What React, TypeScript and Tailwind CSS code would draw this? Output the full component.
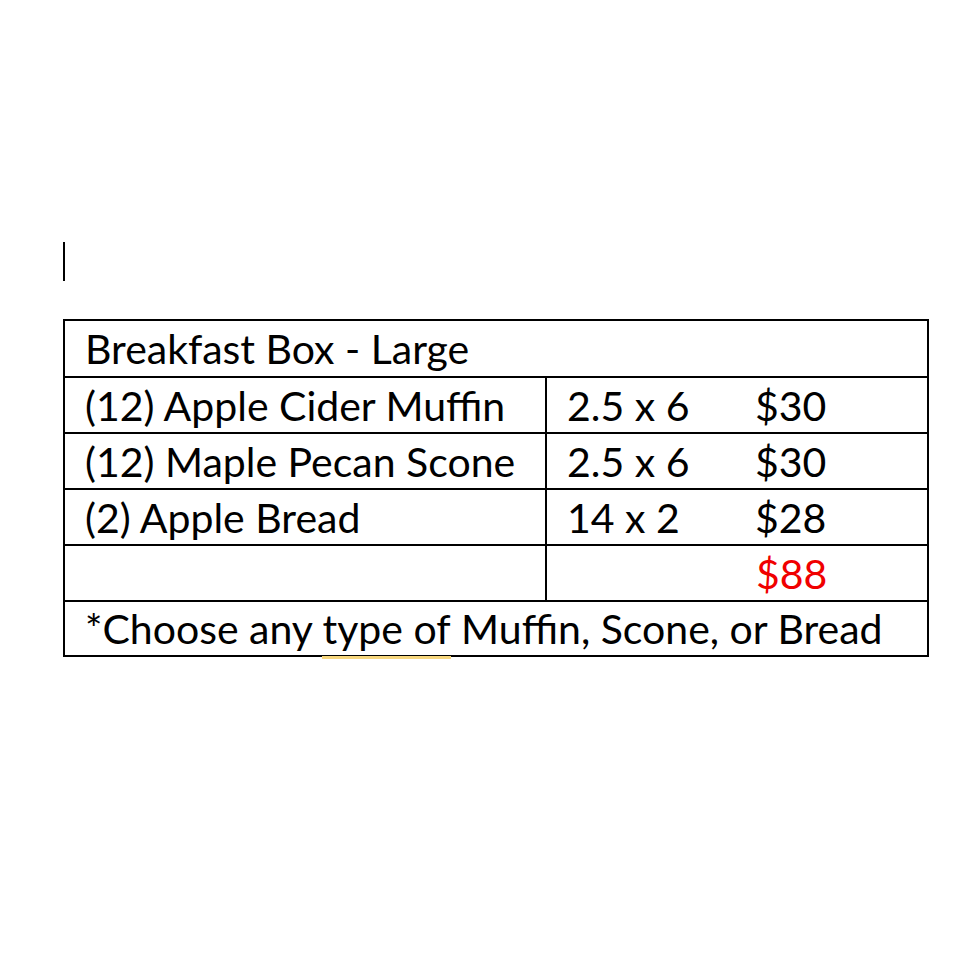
import React from "react";

const rows = [
  { name: "(12) Apple Cider Muffin", size: "2.5 x 6", price: "$30" },
  { name: "(12) Maple Pecan Scone", size: "2.5 x 6", price: "$30" },
  { name: "(2) Apple Bread", size: "14 x 2", price: "$28" },
];

export default function App() {
  return (
    <div className="w-[980px] h-[980px] bg-white text-black font-['Lato','Liberation_Sans',sans-serif]">
      <div className="pt-[242px] pl-[63px]">
        <div className="w-[2px] h-[39px] bg-black" />
      </div>
      <div className="ml-[63px] mt-[38px] w-[866px] border-2 border-black text-[41px] leading-none">
        <div className="h-[55px] flex items-center pl-[20px]">Breakfast Box - Large</div>
        {rows.map((r) => (
          <div key={r.name} className="h-[56px] flex border-t-2 border-black">
            <div className="w-[482px] flex items-center pl-[20px] border-r-2 border-black">{r.name}</div>
            <div className="flex-1 flex items-center pl-[20px]">
              <span className="w-[188px]">{r.size}</span>
              <span>{r.price}</span>
            </div>
          </div>
        ))}
        <div className="h-[56px] flex border-t-2 border-black">
          <div className="w-[482px] border-r-2 border-black" />
          <div className="flex-1 flex items-center pl-[209px] text-[#f00000]">$88</div>
        </div>
        <div className="h-[55px] flex items-center pl-[20px] border-t-2 border-black">
          <span className="whitespace-pre">
            *Choose any{" "}
            <span className="relative inline-block">
              type of
              <span className="absolute left-0 right-0 -bottom-[10px] h-[3px] bg-[#f7d77e]" />
            </span>{" "}
            Muffin, Scone, or Bread
          </span>
        </div>
      </div>
    </div>
  );
}
